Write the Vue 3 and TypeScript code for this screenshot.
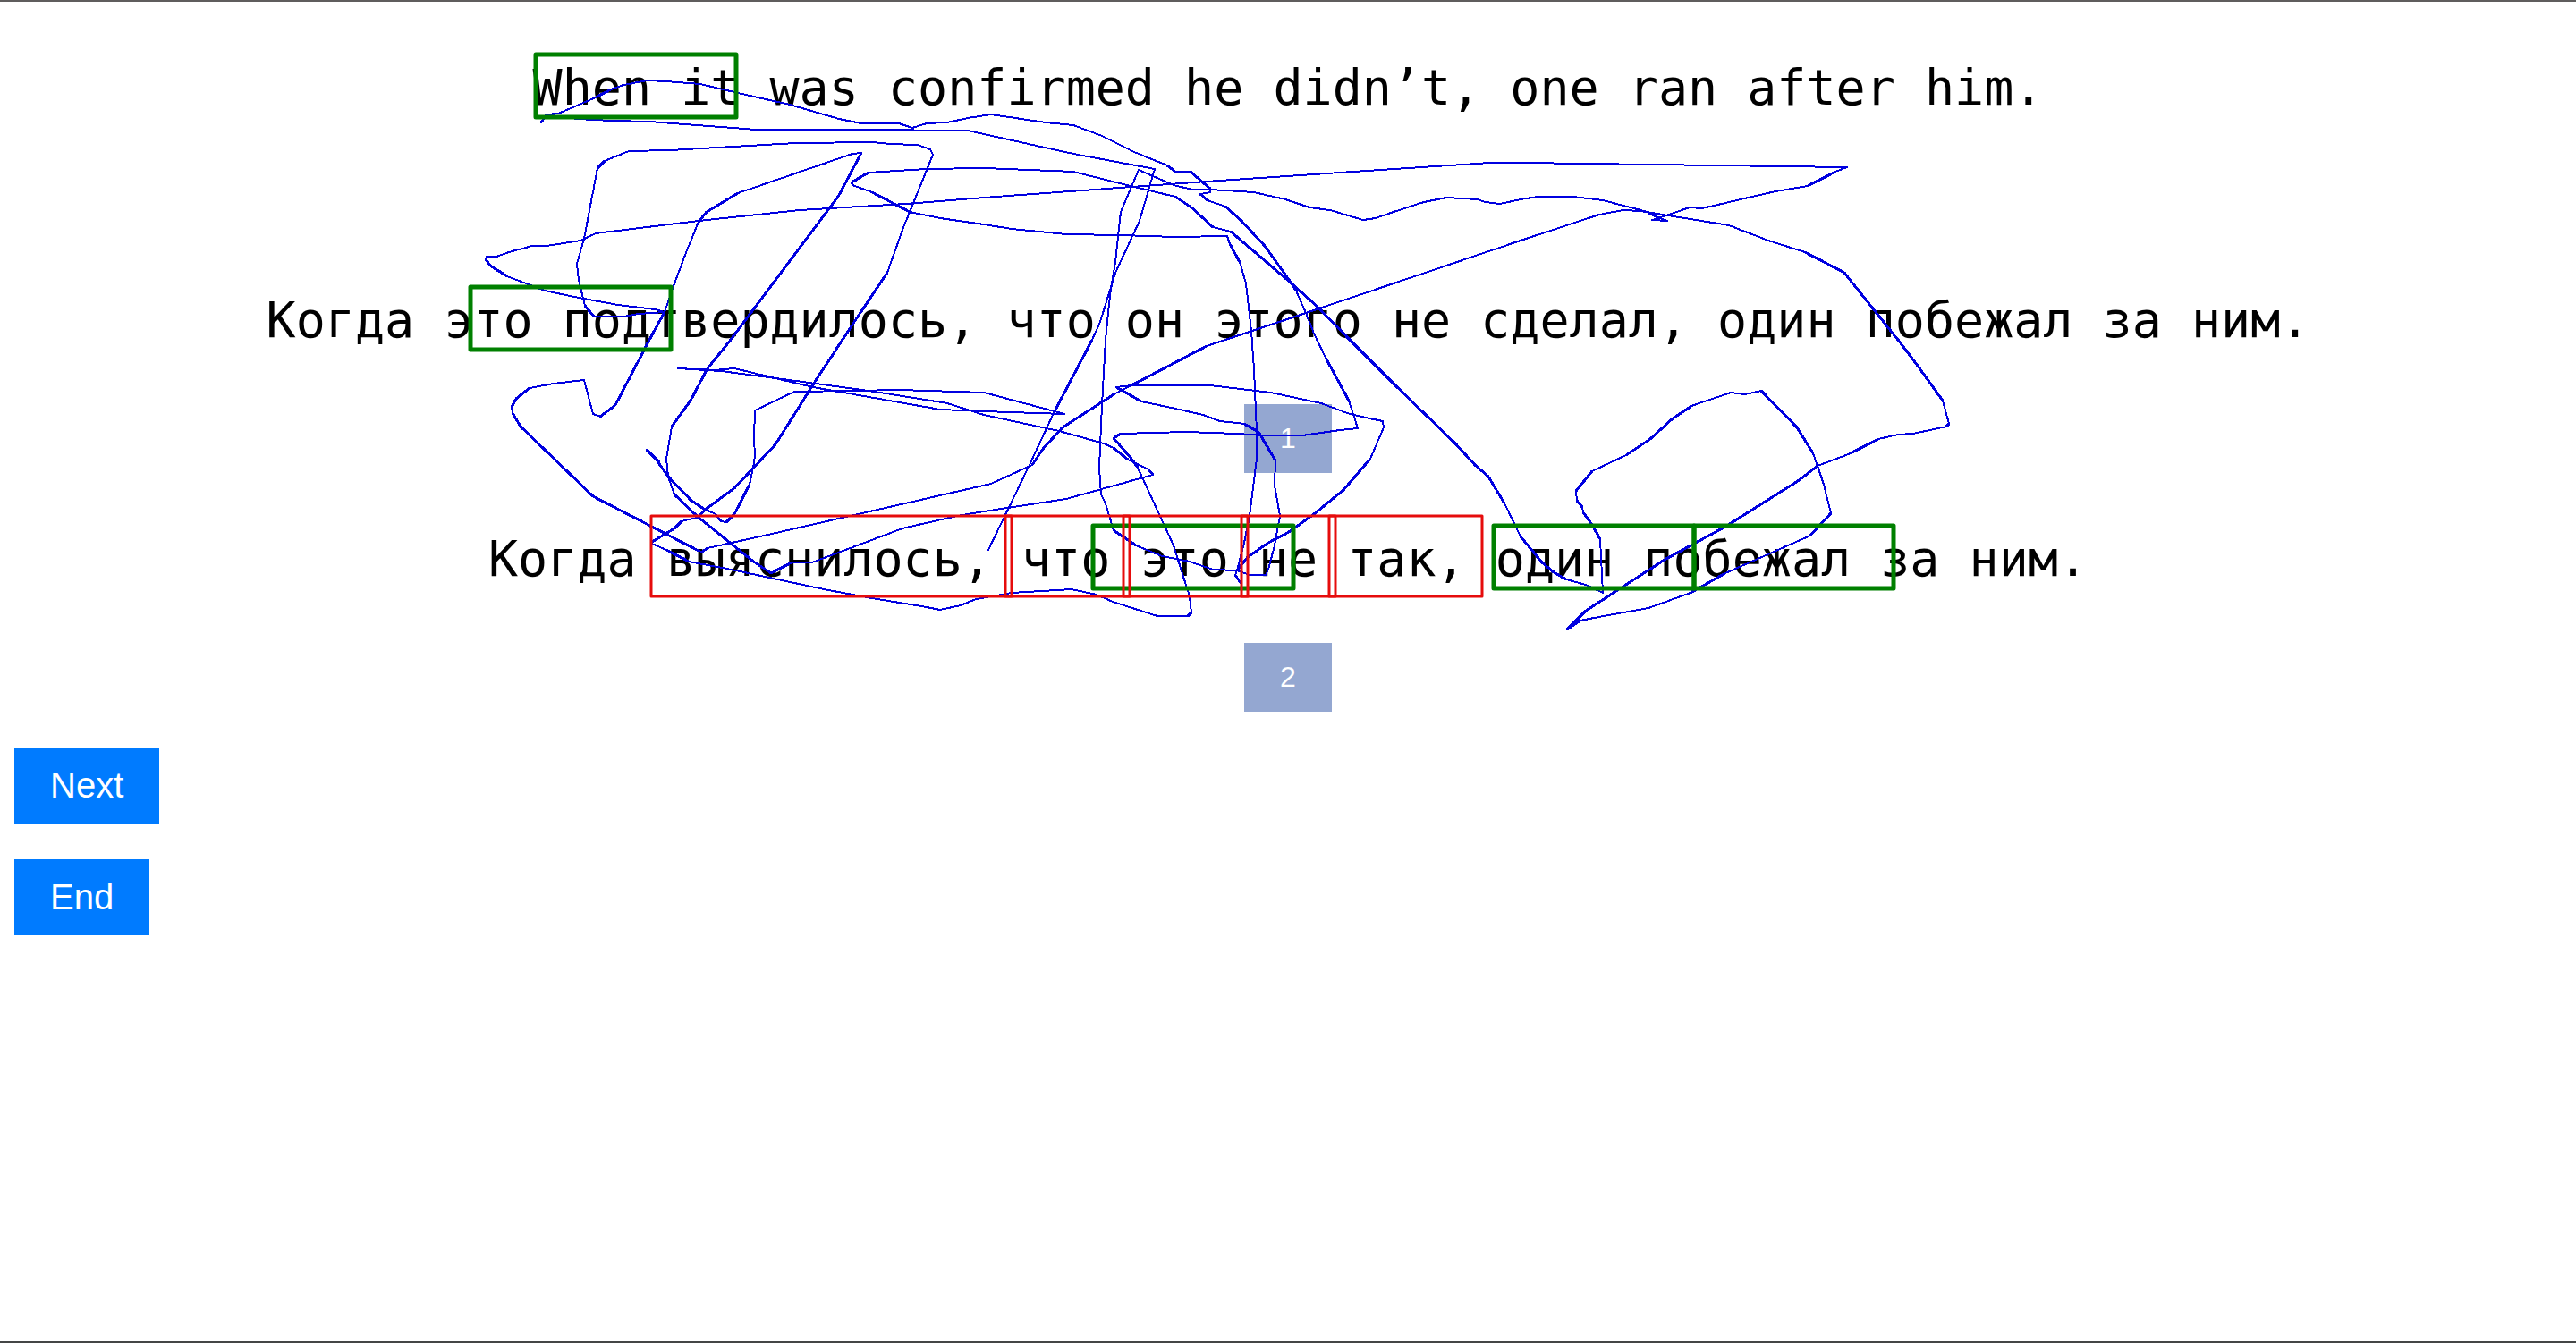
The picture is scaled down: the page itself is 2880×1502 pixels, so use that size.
<script setup lang="ts">
interface Box {
  x: number
  y: number
  width: number
  height: number
}

const source = 'When it was confirmed he didn’t, one ran after him.'

const translations: string[] = [
  'Когда это подтвердилось, что он этого не сделал, один побежал за ним.',
  'Когда выяснилось, что это не так, один побежал за ним.',
]

// Overlay x coordinates are measured from the left of a 2880 unit wide canvas
// whose middle is kept on the middle of the sentences.
const CENTER = 1440

const fixations: Box[] = [
  { x: 599, y: 61, width: 224, height: 70 },
  { x: 526, y: 321, width: 224, height: 70 },
  { x: 1222, y: 588, width: 224, height: 70 },
  { x: 1670, y: 588, width: 224, height: 70 },
  { x: 1894, y: 588, width: 223, height: 70 },
]

const words: Box[] = [
  { x: 728, y: 577, width: 403, height: 90 },
  { x: 1124, y: 577, width: 139, height: 90 },
  { x: 1256, y: 577, width: 139, height: 90 },
  { x: 1388, y: 577, width: 105, height: 90 },
  { x: 1486, y: 577, width: 171, height: 90 },
]

const traces: string[] = [
  `605,137 611,128 624,127 666,109 683,100 697,95 724,90 745,91 783,94 825,104 883,117 938,133 963,138
   1005,138 1020,143 1036,138 1059,137 1082,132 1108,128 1169,137 1200,140 1232,152 1268,170 1305,185
   1314,192 1331,192 1353,211 1353,215 1342,217 1350,224 1370,231 1387,246 1414,275 1444,317 1449,325
   1460,350 1469,373 1482,400 1508,448 1518,479 1498,481 1456,487 1414,487 1383,485 1326,483 1253,485
   1245,490 1265,513 1272,523 1295,573 1312,610 1330,667 1332,685 1328,689 1294,689 1244,673 1226,665
   1198,659 1165,661 1131,663 1091,670 1074,677 1051,682 1036,679 975,669 921,659 818,637 770,628
   745,615 729,608 729,606 754,591 762,583 779,579 791,568 821,546 867,497 911,427 957,357 992,305
   1009,257 1043,173 1040,167 1026,162 994,161 976,159 890,160 749,168 703,169 676,180 668,188 653,267
   645,295 647,313 654,342 664,354 697,354 714,351 743,349 732,346 691,341 642,332 609,325 567,309
   548,297 543,290 544,287 555,287 569,282 595,275 611,275 649,269 666,261 781,247 894,235 1013,228
   1100,221 1265,209 1349,203 1513,192 1666,182 1700,182 2065,187 2052,192 2021,208 1985,214 1903,233
   1889,232 1851,245 1847,246 1864,247 1853,243 1842,237 1792,224 1759,220 1719,220 1700,223 1677,228
   1661,226 1651,223 1617,221 1592,226 1555,238 1538,244 1524,246 1487,235 1464,232 1437,223 1402,215
   1353,212 1333,212 1312,207 1273,190 1253,237 1247,293 1241,330 1236,380 1232,453 1229,523 1231,553
   1236,563 1245,593 1270,610 1299,622 1330,628 1356,637 1383,638 1381,643 1387,652`,
  `1383,638 1395,623 1418,607 1441,595 1469,575 1502,548 1532,513 1547,478 1546,471 1531,468 1509,463
   1477,451 1421,439 1353,431 1265,431 1248,433 1276,449 1314,457 1345,464 1364,471 1391,474 1407,483
   1426,515 1425,543 1431,577 1425,610 1418,637 1415,643 1397,643 1383,638 1391,607 1397,577 1405,513
   1405,483 1402,413 1399,370 1393,317 1386,293 1375,273 1372,264 1314,265 1253,263 1192,262 1131,256
   1100,251 1051,244 1017,237 975,215 953,207 952,204 971,193 1035,189 1100,188 1200,192 1268,209
   1314,220 1332,232 1356,254 1376,259 1444,317 1475,345 1509,380 1559,430 1628,497 1649,520 1664,533
   1682,563 1700,600 1724,629 1737,640 1751,648 1773,654 1792,663 1791,643 1789,603 1780,587 1770,573
   1769,567 1763,560 1762,549 1780,527 1818,509 1845,491 1869,469 1891,454 1935,439 1951,441 1969,437
   2009,478 2027,507 2032,521 2039,542 2047,574 2024,599 1929,641 1890,663 1843,680 1782,691 1767,694
   1752,704 1773,683 1861,626 1929,589 2010,538 2032,521 2069,507 2100,491 2122,486 2139,485 2176,477
   2179,474 2172,448 2141,405 2122,380 2062,305 2018,282 1977,269 1933,252 1865,241 1834,236 1815,235
   1788,240 1700,269 1475,345 1349,387 1265,431 1247,440 1188,478 1166,502 1154,520 1108,541 850,600
   791,613 785,617 781,616 663,555 582,477 573,462 572,455 577,446 592,434 619,429 653,425 663,463
   671,466 688,453 726,380 743,349 753,320 768,280 781,248 790,237 825,216 953,172 963,171 937,220
   817,380 791,412 772,448 751,477 745,513 747,533 754,553 779,577 841,627 862,641 885,629 908,629
   1009,591 1070,577 1100,572 1192,558 1289,531 1284,525 1261,514 1245,501 1234,496 1184,482 1100,464
   1059,451 978,438 890,426 806,415 758,412 799,414 821,412 909,433 1051,458 1100,460 1190,463
   1100,439 1005,436 955,437 888,438 844,459 843,490 844,510 842,523 838,542 821,575 812,584 806,583
   800,575 787,569 773,560 747,533 733,513 723,503 737,517`,
  `605,137 611,128 645,133 684,135 726,136 846,145 959,145 1082,146 1100,150 1200,172 1291,189
   1274,247 1247,305 1230,360 1221,380 1178,462 1150,522 1105,615`,
]

const DIAGONAL = 0.5

function segments(points: string, diagonal: boolean): string {
  const coords = points.trim().split(/\s+/).map((p) => p.split(',').map(Number))
  let d = ''
  for (let i = 1; i < coords.length; i++) {
    const [x0, y0] = coords[i - 1]
    const [x1, y1] = coords[i]
    const dx = Math.abs(x1 - x0)
    const dy = Math.abs(y1 - y0)
    const isDiagonal = Math.min(dx, dy) > DIAGONAL * Math.max(dx, dy)
    if (isDiagonal === diagonal) d += `M${x0} ${y0}L${x1} ${y1}`
  }
  return d
}

const thinPath = traces.map((t) => segments(t, false)).join('')
const widePath = traces.map((t) => segments(t, true)).join('')
</script>

<template>
  <main class="page">
    <p class="sentence source">{{ source }}</p>
    <section v-for="(text, i) in translations" :key="i" class="option">
      <p class="sentence">{{ text }}</p>
      <button type="button" class="choice">{{ i + 1 }}</button>
    </section>
    <nav class="actions">
      <button type="button" class="action">Next</button>
      <button type="button" class="action">End</button>
    </nav>

    <svg class="overlay" aria-hidden="true">
      <g :transform="`translate(${-CENTER} 0)`">
        <path class="trace" :d="thinPath" />
        <path class="trace wide" :d="widePath" />
        <rect v-for="(box, i) in fixations" :key="`f${i}`" class="fixation" v-bind="box" />
        <rect v-for="(box, i) in words" :key="`w${i}`" class="word" v-bind="box" />
      </g>
    </svg>
  </main>
</template>

<style>
body {
  margin: 0;
  background: #fff;
}
</style>

<style scoped>
.page {
  position: relative;
  box-sizing: border-box;
  min-height: 100vh;
  padding: 60px 16px 16px;
  overflow: hidden;
  border-top: 2px solid #5f5d5d;
  border-bottom: 2px solid #444646;
}

.sentence {
  margin: 0;
  color: #000;
  font-family: Consolas, "DejaVu Sans Mono", monospace;
  font-size: 55px;
  line-height: 72px;
  text-align: center;
}

.source {
  margin-bottom: 188px;
}

.option {
  display: flex;
  flex-direction: column;
  align-items: center;
  gap: 58px;
}

.option + .option {
  margin-top: 60px;
}

button {
  border: 0;
  color: #fff;
  font-family: Arial, "Liberation Sans", sans-serif;
  cursor: pointer;
}

.choice {
  padding: 20px 40px;
  background: #94a7d1;
  font-size: 32px;
  line-height: 37px;
}

.actions {
  display: flex;
  flex-direction: column;
  align-items: flex-start;
  gap: 40px;
  margin-top: 40px;
}

.action {
  padding: 20px 40px;
  background: #007bff;
  font-size: 40px;
  line-height: 45px;
}

.overlay {
  position: absolute;
  top: -2px;
  left: 50%;
  width: 1px;
  height: 1px;
  overflow: visible;
  pointer-events: none;
}

.overlay * {
  fill: none;
}

.trace {
  stroke: #0000e0;
  stroke-width: 2;
  stroke-linecap: round;
  shape-rendering: crispEdges;
}

.wide {
  stroke-width: 3;
}

.fixation {
  stroke: #008000;
  stroke-width: 5;
  stroke-linejoin: round;
}

.word {
  stroke: #e60c0c;
  stroke-width: 3;
  stroke-linejoin: round;
}
</style>
